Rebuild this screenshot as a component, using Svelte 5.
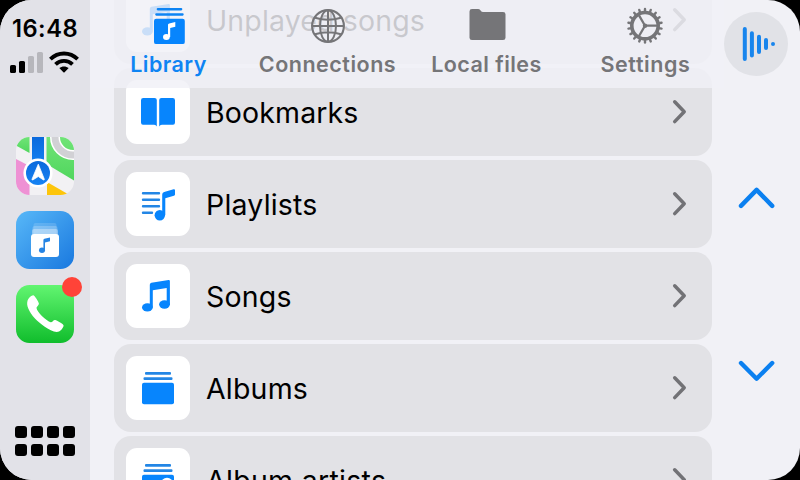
<script>
  const rows = [
    { label: 'Unplayed songs', icon: 'songs', spacing: 0.14 },
    { label: 'Bookmarks', icon: 'book', spacing: 0.14 },
    { label: 'Playlists', icon: 'playlist', spacing: 0.2 },
    { label: 'Songs', icon: 'songs', spacing: 0.2 },
    { label: 'Albums', icon: 'albums', spacing: 0.2 },
    { label: 'Album artists', icon: 'artists', spacing: 0.3 }
  ];
  const tabs = [
    { label: 'Library', icon: 'library', spacing: 0.45 },
    { label: 'Connections', icon: 'globe', spacing: 0.5 },
    { label: 'Local files', icon: 'folder', spacing: 0.45 },
    { label: 'Settings', icon: 'gear', spacing: 0.6 }
  ];
  const teeth = Array.from({ length: 18 }, (_, i) => i * 20);
</script>

<div class="screen">
  <aside>
    <time>16:48</time>
    <div class="status">
      <svg width="34" height="22" viewBox="0 0 34 22">
        <rect x="0" y="14" width="6" height="8" rx="1.6" />
        <rect x="9" y="10" width="6" height="12" rx="1.6" />
        <rect x="18" y="5" width="6" height="17" rx="1.6" fill="#b7b7bc" />
        <rect x="27" y="1" width="6" height="21" rx="1.6" fill="#b7b7bc" />
      </svg>
      <svg width="30" height="22" viewBox="0 0 30 22">
        <g fill="none" stroke="#000" stroke-width="3.8">
          <path d="M1.4 8.2C9 .6 21 .6 28.6 8.2" />
          <path d="M6.5 13.3C11.2 8.7 18.8 8.7 23.5 13.3" />
        </g>
        <path d="M10.3 17.1C13 14.8 17 14.8 19.7 17.1L15.6 21.2Q15 21.8 14.4 21.2Z" />
      </svg>
    </div>

    <div class="apps">
      <svg class="app" viewBox="0 0 58 58">
        <defs>
          <linearGradient id="mg" x2="0" y2="1"><stop stop-color="#70e477" /><stop offset="1" stop-color="#50d65d" /></linearGradient>
          <linearGradient id="mb" x2="0" y2="1"><stop stop-color="#0b69dc" /><stop offset="1" stop-color="#1683f4" /></linearGradient>
          <clipPath id="mc"><rect width="58" height="58" rx="13.5" /></clipPath>
        </defs>
        <g clip-path="url(#mc)">
          <rect width="58" height="58" fill="#f2f1f4" />
          <path d="M0 0H13.5V16L0 8.5Z" fill="url(#mg)" />
          <path d="M0 22L13.5 29V58H0Z" fill="#ee91d4" />
          <path d="M30.5 0H58V43.5L30.5 27Z" fill="url(#mg)" />
          <path d="M31 45L53.5 58H31Z" fill="#fdc50b" />
          <circle cx="57" cy="0" r="18" fill="none" stroke="#fff" stroke-width="10" />
          <circle cx="57" cy="0" r="18" fill="none" stroke="#d1d1d5" stroke-width="7" />
          <rect x="16" y="0" width="12" height="30" fill="url(#mb)" />
          <circle cx="22" cy="36" r="14.6" fill="#fff" />
          <circle cx="22" cy="36" r="12" fill="url(#mb)" />
          <path d="M22.3 27.2L28.3 42.2Q28.5 43.4 27.2 42.8L22.3 39.5L17.1 42.8Q15.8 43.4 16 42.2Z" fill="#fff" stroke="#fff" stroke-width=".8" stroke-linejoin="round" />
        </g>
      </svg>
      <svg class="app" viewBox="0 0 58 58">
        <defs><linearGradient id="bl" x2="1" y2="1"><stop stop-color="#58b8f8" /><stop offset="1" stop-color="#1978df" /></linearGradient></defs>
        <rect width="58" height="58" rx="13.5" fill="url(#bl)" />
        <rect x="17.5" y="12" width="23" height="12" rx="2" fill="#fff" opacity=".15" />
        <rect x="16.5" y="15" width="25" height="9" rx="2" fill="#fff" opacity=".22" />
        <rect x="16" y="18" width="26" height="7" rx="2" fill="#fff" opacity=".35" />
        <rect x="15" y="23" width="28" height="23" rx="3" fill="#fff" />
        <ellipse cx="26" cy="39.2" rx="3" ry="2.7" fill="#2584e4" />
        <path d="M27.4 39.2V29Q27.4 28 28.4 27.8L34 26.5V30.2L29 31.4V39.2Z" fill="#2584e4" />
      </svg>
      <div class="badged">
        <svg class="app" viewBox="0 0 58 58">
          <defs><linearGradient id="gr" x2="0" y2="1"><stop stop-color="#62f571" /><stop offset="1" stop-color="#10bd2c" /></linearGradient></defs>
          <rect width="58" height="58" rx="13.5" fill="url(#gr)" />
          <path d="M17.1 10.3C18.5 10.1 22.7 17 22.9 18.5C23.1 20.3 20.3 21.7 20.5 23.1C20.9 26.8 30.5 36.4 34.7 37.3C36.4 37.6 37.2 34.7 39.2 35C40.9 35.3 46.9 38.7 47.5 40.3C47.9 41.8 45.4 45.5 43 46.5C39.4 48 33.5 45.2 28.4 41.5C21.5 36.5 15 30.4 12.3 23.5C9.8 17.6 11.6 12.1 17.1 10.3Z" fill="#fff" />
        </svg>
        <i class="badge"></i>
      </div>
    </div>

    <div class="grid">
      {#each Array(8) as _}<i></i>{/each}
    </div>
  </aside>

  <main>
    <header>
      {#each tabs as tab, i}
        <div class="tab" class:active={i === 0}>
          <svg width="40" height="40" viewBox="-20 -20 40 40">
            {#if tab.icon === 'library'}
              <g fill="currentColor">
                <rect x="-12.3" y="-18" width="25.6" height="2.4" rx="1.1" />
                <rect x="-13.8" y="-12.7" width="28.5" height="2.4" rx="1.1" />
                <rect x="-15" y="-7.2" width="30.8" height="25.3" rx="2.2" fill="#0785fd" />
              </g>
              <ellipse cx="-2.6" cy="11" rx="3.4" ry="2.9" fill="#fff" />
              <path d="M-1 11V-1.2Q-1-2.3 .2-2.6L6.3-3.9V.7L1.2 2V11Z" fill="#fff" />
            {:else if tab.icon === 'globe'}
              <g fill="none" stroke="currentColor" stroke-width="2">
                <circle r="15.9" stroke-width="2.1" />
                <ellipse rx="8" ry="15.8" />
                <path d="M0-16V16M-16 0H16M-13-8.2Q0-4.2 13-8.2M-13 8.2Q0 4.2 13 8.2" />
              </g>
            {:else if tab.icon === 'folder'}
              <path d="M-17.5-14.6Q-17.5-17-15-17H-9Q-7.5-17-6.6-15.8Q-5.8-14.4-4.2-14H16Q18.5-14 18.5-11.7V11.7Q18.5 14 16 14H-15Q-17.5 14-17.5 11.7Z" fill="currentColor" />
            {:else}
              <g fill="none" stroke="currentColor" transform="translate(-1 -.3)">
                <circle r="13.2" stroke-width="3.6" />
                {#each teeth as a}
                  <path d="M0-14V-16.8" stroke-width="2.4" stroke-linecap="round" transform="rotate({a})" />
                {/each}
                <path d="M12.5 0H0L-6.4-11.1M0 0L-6.4 11.1" stroke-width="2.3" />
                <circle r="1.5" stroke-width="1.5" />
              </g>
            {/if}
          </svg>
          <span style:letter-spacing="{tab.spacing}px">{tab.label}</span>
        </div>
      {/each}
    </header>

    <div class="list">
      {#each rows as row}
        <div class="row">
          <div class="tile">
            <svg width="40" height="40" viewBox="-20 -20 40 40" fill="#0785fd">
              {#if row.icon === 'songs'}
                <ellipse cx="-10.6" cy="11.4" rx="5.4" ry="4.2" />
                <ellipse cx="6.5" cy="8.5" rx="5.4" ry="4.2" />
                <path d="M-8.2 11.5V-11.3Q-8.2-12.9-6.6-13.2L10.6-15.9Q11.9-16 11.9-14.8V9H8.7V-7.9L-5.2-5.8V11.5Z" />
              {:else if row.icon === 'book'}
                <path d="M-17-11.7Q-17-14-14.7-14H-3.5Q-1.2-14-1.2-12V14.5Q-2 12.8-3.8 12.8H-15Q-17 12.8-17 10.6Z" />
                <path d="M17-11.7Q17-14 14.7-14H3.5Q1.2-14 1.2-12V14.5Q2 12.8 3.8 12.8H15Q17 12.8 17 10.6Z" />
              {:else if row.icon === 'playlist'}
                <g fill="none" stroke="#2386e5" stroke-width="2.4" stroke-linecap="round">
                  <path d="M-15-10.8H1M-15-4.3H1M-15 2.2H1M-15 8.8H-6" />
                </g>
                <ellipse cx="1.8" cy="11.3" rx="5.2" ry="5.3" />
                <path d="M4.2 11V-9Q4.2-11.7 7-12.3L15.6-14.7Q17-15 17-13.7V-9.5Q17-8.5 15.9-8.2L7.3-5.8V11Z" />
              {:else}
                <rect x="-13" y="-16" width="26" height="2.8" rx="1" fill="#2386e5" />
                <rect x="-14.5" y="-10.8" width="29" height="2.8" rx="1" fill="#2386e5" />
                <rect x="-16" y="-5.2" width="32" height="21.4" rx="2" />
                {#if row.icon === 'artists'}
                  <circle cx="9" cy="4" r="6.2" fill="#fff" />
                {/if}
              {/if}
            </svg>
          </div>
          <span class="label" style:letter-spacing="{row.spacing}px">{row.label}</span>
          <svg class="chevron" width="16" height="26" viewBox="0 0 16 26"><path d="M2.7 2.8L12.2 12.7L2.7 22.6" /></svg>
        </div>
      {/each}
    </div>
  </main>

  <nav>
    <div class="playing">
      <svg width="64" height="64" viewBox="0 0 64 64">
        <path d="M20.8 17V47M27.9 21.3V43.5M35 24.7V40M42 28V36M49 32V32.1" />
      </svg>
    </div>
    <svg class="arrow up" width="40" height="26" viewBox="0 0 40 26"><path d="M5 20.9L20.6 4.9L36.2 20.9" /></svg>
    <svg class="arrow" width="40" height="26" viewBox="0 0 40 26"><path d="M5 5L20.6 20.7L36.2 5" /></svg>
  </nav>
</div>

<style>
  :global(body) { margin: 0; background: #000; }
  .screen {
    display: flex;
    width: 800px;
    height: 480px;
    overflow: hidden;
    border-radius: 32px;
    background: #f1f1f6;
    font-family: Inter, 'Liberation Sans', sans-serif;
  }
  svg { display: block; flex: none; }
  aside {
    display: flex;
    flex-direction: column;
    align-items: center;
    width: 90px;
    box-sizing: border-box;
    padding: 15px 0 24px;
    background: #e2e2e8;
    flex: none;
  }
  time { font-size: 23.7px; line-height: 28px; font-weight: 600; letter-spacing: 0.5px; }
  .status { display: flex; gap: 5px; margin: 8px 1px 0 0; }
  .apps { display: flex; flex-direction: column; gap: 16px; margin-top: 64px; }
  .app { width: 58px; height: 58px; }
  .badged { position: relative; }
  .badge {
    position: absolute;
    top: -8px;
    right: -8px;
    width: 20px;
    height: 20px;
    border-radius: 50%;
    background: #ff4338;
  }
  .grid {
    display: grid;
    grid-template-columns: repeat(4, 12px);
    gap: 6px 4px;
    margin-top: auto;
  }
  .grid i { height: 12px; border-radius: 3px; background: #000; }
  main { position: relative; width: 634px; height: 480px; overflow: hidden; flex: none; }
  header {
    position: absolute;
    z-index: 1;
    top: 0;
    left: -1px;
    display: flex;
    width: 636px;
    height: 88px;
    background: rgba(241, 241, 246, 0.83);
  }
  .tab {
    display: flex;
    flex-direction: column;
    align-items: center;
    width: 159px;
    padding-top: 6px;
    color: #757578;
  }
  .tab.active { color: #0e84f3; }
  .tab span { margin-top: 5px; font-size: 21.5px; line-height: 27px; font-weight: 600; white-space: nowrap; }
  .list { display: flex; flex-direction: column; gap: 4px; margin: -24px 12px 0 24px; }
  .row {
    display: flex;
    align-items: center;
    height: 88px;
    box-sizing: border-box;
    padding: 0 24px 0 12px;
    border-radius: 17px;
    background: #e2e2e6;
    flex: none;
  }
  .tile {
    display: flex;
    align-items: center;
    justify-content: center;
    width: 64px;
    height: 64px;
    border-radius: 11px;
    background: #fff;
  }
  .label { flex: 1; margin-left: 16px; padding-top: 2px; font-size: 28.5px; line-height: 36px; white-space: nowrap; }
  .chevron path { fill: none; stroke: #727276; stroke-width: 3.5; stroke-linecap: round; stroke-linejoin: round; }
  nav { display: flex; flex-direction: column; align-items: center; width: 64px; padding-top: 12px; }
  .playing { width: 64px; height: 64px; border-radius: 50%; background: #e1e2e7; }
  .playing path { fill: none; stroke: #1885ed; stroke-width: 4; stroke-linecap: round; }
  .arrow path { fill: none; stroke: #0b80f0; stroke-width: 4.4; stroke-linecap: round; stroke-linejoin: round; }
  .up { margin: 109px 0 147px; }
</style>
